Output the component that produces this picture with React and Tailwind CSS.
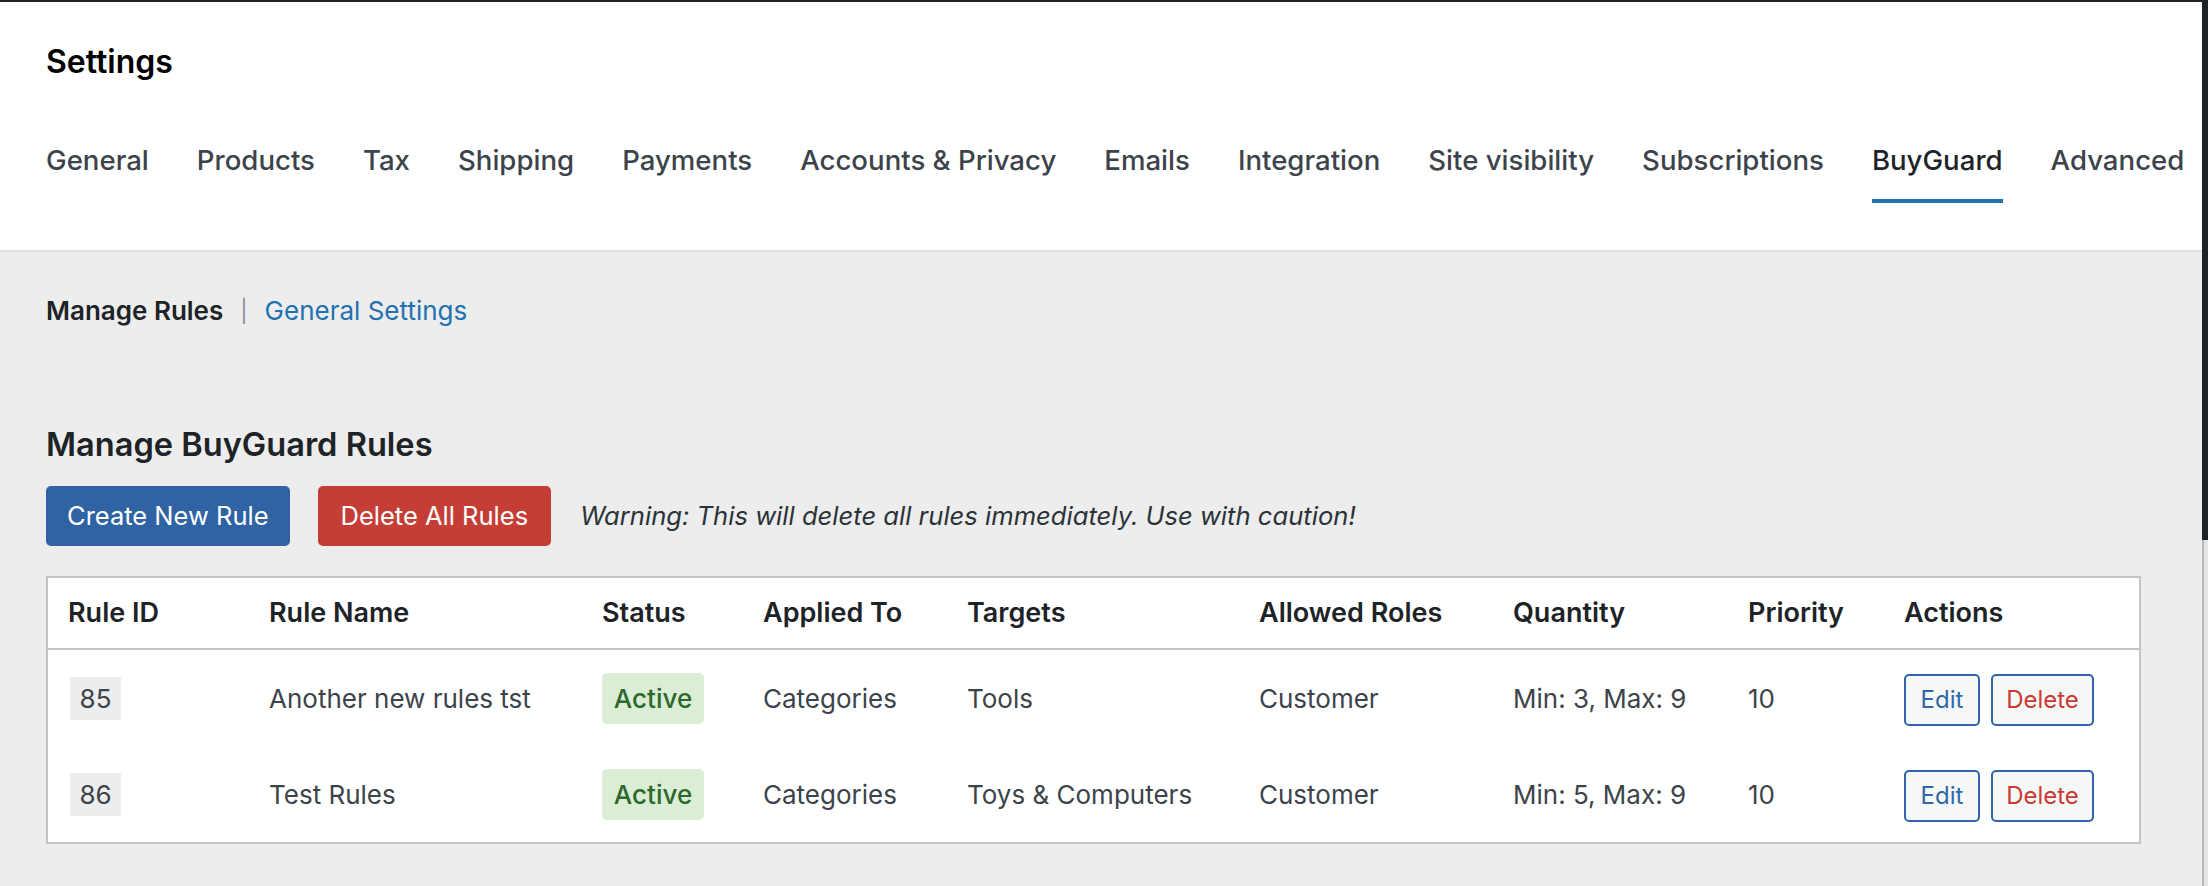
import React from 'react';

const tabs = [
    'General',
    'Products',
    'Tax',
    'Shipping',
    'Payments',
    'Accounts & Privacy',
    'Emails',
    'Integration',
    'Site visibility',
    'Subscriptions',
    'BuyGuard',
    'Advanced',
];

const columns = ['Rule ID', 'Rule Name', 'Status', 'Applied To', 'Targets', 'Allowed Roles', 'Quantity', 'Priority', 'Actions'];

const rules = [
    { id: 85, name: 'Another new rules tst', status: 'Active', applied: 'Categories', targets: 'Tools', roles: 'Customer', qty: 'Min: 3, Max: 9', priority: 10 },
    { id: 86, name: 'Test Rules', status: 'Active', applied: 'Categories', targets: 'Toys & Computers', roles: 'Customer', qty: 'Min: 5, Max: 9', priority: 10 },
];

const gridCols = 'grid grid-cols-[201px_333px_161px_204px_292px_254px_235px_156px_1fr]';

function Tab({ label, active }) {
    return (
        <div
            className={
                'pb-[21px] border-b-4 leading-[36px] text-[27.6px] font-medium ' +
                (active ? 'border-[#2271b1] text-[#1d2327]' : 'border-transparent text-[#3c434a]')
            }
        >
            {label}
        </div>
    );
}

function RuleRow({ rule }) {
    return (
        <div className={gridCols + ' h-[96px] items-center text-[26px] text-[#3c434a]'}>
            <div className="pl-[22px]">
                <span className="inline-flex h-[43px] w-[51px] items-center justify-center bg-[#ededed] text-[26px] text-[#3c434a]">
                    {rule.id}
                </span>
            </div>
            <div className="pl-[20px]">{rule.name}</div>
            <div className="pl-[20px]">
                <span className="inline-flex h-[51px] w-[102px] items-center justify-center rounded-[5px] bg-[#dcedd5] font-medium text-[#2a6a2c]">
                    {rule.status}
                </span>
            </div>
            <div className="pl-[20px]">{rule.applied}</div>
            <div className="pl-[20px]">{rule.targets}</div>
            <div className="pl-[20px]">{rule.roles}</div>
            <div className="pl-[20px]">{rule.qty}</div>
            <div className="pl-[20px]">{rule.priority}</div>
            <div className="pl-[20px] mt-[4px] flex gap-[11px]">
                <button className="h-[52px] w-[76px] rounded-[5px] border-2 border-[#2f66a8] bg-[#f6f7f7] text-[24px] text-[#2f66a8]">
                    Edit
                </button>
                <button className="h-[52px] w-[103px] rounded-[5px] border-2 border-[#2f66a8] bg-[#f6f7f7] text-[24px] text-[#cc3a33]">
                    Delete
                </button>
            </div>
        </div>
    );
}

export default function App() {
    return (
        <div className="flex w-[2208px] h-[886px] overflow-hidden bg-[#ededed] font-['Inter',sans-serif]">
            <div className="w-[2202px] flex flex-col">
                <div className="h-[2px] bg-[#1d2327]" />

                {/* Header with tabs */}
                <header className="h-[250px] bg-white border-b-2 border-[#e2e2e2] px-[46px]">
                    <h1 className="pt-[41px] text-[32px] leading-[37px] font-semibold text-black">Settings</h1>
                    <nav className="mt-[62px] flex gap-[48px] whitespace-nowrap">
                        {tabs.map((t) => (
                            <Tab key={t} label={t} active={t === 'BuyGuard'} />
                        ))}
                    </nav>
                </header>

                <main className="px-[46px]">
                    <div className="pt-[43px] flex items-center gap-[17px] text-[26px] leading-[32px]">
                        <span className="font-semibold text-[#1d2327]">Manage Rules</span>
                        <span className="text-[#8c8f94] text-[22px]">|</span>
                        <span className="text-[#2271b1]">General Settings</span>
                    </div>

                    <h2 className="mt-[98px] text-[32.6px] leading-[38px] font-semibold text-[#1d2327]">
                        Manage BuyGuard Rules
                    </h2>

                    <div className="mt-[23px] flex items-center">
                        <button className="h-[60px] px-[21px] rounded-[5px] bg-[#2f63a4] text-white text-[25.5px]">
                            Create New Rule
                        </button>
                        <button className="ml-[28px] h-[60px] px-[23px] rounded-[5px] bg-[#c53e36] text-white text-[25.5px]">
                            Delete All Rules
                        </button>
                        <em className="ml-[29px] text-[25.6px] text-[#2c3338]">
                            Warning: This will delete all rules immediately. Use with caution!
                        </em>
                    </div>

                    {/* Rules table */}
                    <div className="mt-[30px] w-[2095px] border-2 border-[#c3c4c7] bg-white">
                        <div className={gridCols + ' h-[72px] items-center border-b-2 border-[#c3c4c7] text-[27px] font-semibold text-[#1d2327]'}>
                            {columns.map((c) => (
                                <div key={c} className="pl-[20px]">
                                    {c}
                                </div>
                            ))}
                        </div>
                        {rules.map((r) => (
                            <RuleRow key={r.id} rule={r} />
                        ))}
                    </div>
                </main>
            </div>

            {/* edge of the neighbouring window */}
            <div className="w-[6px] flex flex-col">
                <div className="h-[540px] bg-[#1d2327]" />
                <div className="flex-1 bg-[#e4e4e4] border-l-2 border-[#b8b8b8]" />
            </div>
        </div>
    );
}
